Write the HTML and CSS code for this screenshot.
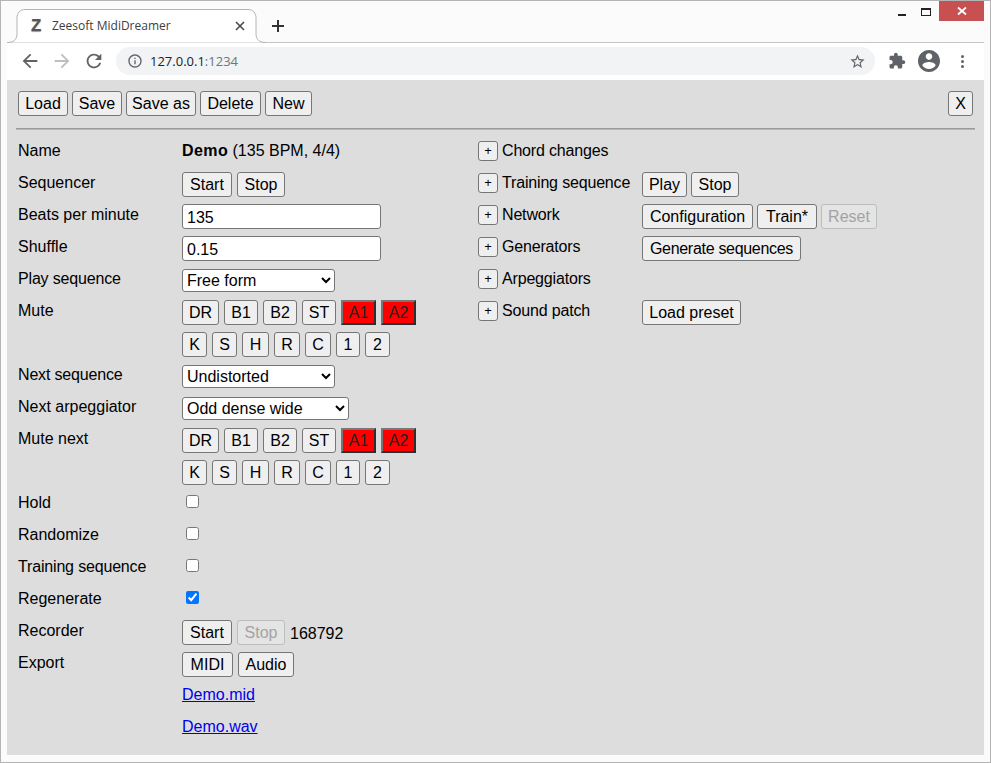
FILE: index.html
```html
<!DOCTYPE html>
<html lang="en">
<head>
    <meta charset="UTF-8">
    <title>Zeesoft MidiDreamer</title>
    <link rel="stylesheet" href="styles.css">
</head>
<body>
    <div class="window">
        <div class="titlebar">
            <div class="tab">
                <svg class="tab-shape" width="259" height="34" viewBox="0 0 259 34"><path d="M0 33.5C6 33.5 10 31 10 25V9C10 4 13 .5 18 .5H241C246 .5 249 4 249 9V25C249 31 253 33.5 259 33.5" fill="#fff" stroke="#b4b4b4"/></svg>
                <span class="favicon">Z</span>
                <span class="tab-title">Zeesoft MidiDreamer</span>
                <svg class="tab-close" width="10" height="10" viewBox="0 0 10 10"><path d="M1 1l8 8M9 1l-8 8" stroke="#45494d" stroke-width="1.6"/></svg>
            </div>
            <svg class="new-tab" width="14" height="14" viewBox="0 0 14 14"><path d="M7 1v12M1 7h12" stroke="#333" stroke-width="2"/></svg>
            <div class="window-buttons">
                <span class="win-min"></span>
                <span class="win-max"></span>
                <span class="win-close"><svg width="10" height="10" viewBox="0 0 10 10"><path d="M1 1.5l8 7M9 1.5l-8 7" stroke="#fff" stroke-width="1.8"/></svg></span>
            </div>
        </div>
        <div class="toolbar">
            <svg class="tool" viewBox="0 0 24 24"><path fill="#5f6368" d="M20 11H7.83l5.59-5.59L12 4l-8 8 8 8 1.41-1.41L7.83 13H20v-2z"/></svg>
            <svg class="tool" viewBox="0 0 24 24"><path fill="#bcbec0" d="M4 11h12.17l-5.59-5.59L12 4l8 8-8 8-1.41-1.41L16.17 13H4v-2z"/></svg>
            <svg class="tool" viewBox="0 0 24 24"><path fill="#5f6368" d="M17.65 6.35C16.2 4.9 14.21 4 12 4c-4.42 0-7.99 3.58-7.99 8s3.57 8 7.99 8c3.73 0 6.84-2.55 7.73-6h-2.08c-.82 2.33-3.04 4-5.65 4-3.31 0-6-2.69-6-6s2.69-6 6-6c1.66 0 3.14.69 4.22 1.78L13 11h7V4l-2.35 2.35z"/></svg>
            <div class="omnibox">
                <svg class="info" viewBox="0 0 24 24"><path fill="#5f6368" d="M11 7h2v2h-2zm0 4h2v6h-2zm1-9C6.48 2 2 6.48 2 12s4.48 10 10 10 10-4.48 10-10S17.52 2 12 2zm0 18c-4.41 0-8-3.59-8-8s3.59-8 8-8 8 3.59 8 8-3.59 8-8 8z"/></svg>
                <span class="url">127.0.0.1<span class="url-port">:1234</span></span>
                <svg class="star" viewBox="0 0 24 24"><path fill="#5f6368" d="M22 9.24l-7.19-.62L12 2 9.19 8.63 2 9.24l5.46 4.73L5.82 21 12 17.27 18.18 21l-1.63-7.03L22 9.24zM12 15.4l-3.76 2.27 1-4.28-3.32-2.88 4.38-.38L12 6.1l1.71 4.04 4.38.38-3.32 2.88 1 4.28L12 15.4z"/></svg>
            </div>
            <svg class="puzzle" viewBox="0 0 24 24"><path fill="#5f6368" d="M20.5 11H19V7c0-1.1-.9-2-2-2h-4V3.5C13 2.12 11.88 1 10.5 1S8 2.12 8 3.5V5H4c-1.1 0-1.99.9-1.99 2v3.8H3.5c1.49 0 2.7 1.21 2.7 2.7s-1.21 2.7-2.7 2.7H2V20c0 1.1.9 2 2 2h3.8v-1.5c0-1.49 1.21-2.7 2.7-2.7 1.49 0 2.7 1.21 2.7 2.7V22H17c1.1 0 2-.9 2-2v-4h1.5c1.38 0 2.5-1.12 2.5-2.5S21.88 11 20.5 11z"/></svg>
            <svg class="avatar" viewBox="2 2 20 20"><path fill="#5f6368" d="M12 2C6.48 2 2 6.48 2 12s4.48 10 10 10 10-4.48 10-10S17.52 2 12 2zm0 3c1.66 0 3 1.34 3 3s-1.34 3-3 3-3-1.34-3-3 1.34-3 3-3zm0 14.2c-2.5 0-4.71-1.28-6-3.22.03-1.99 4-3.08 6-3.08 1.99 0 5.97 1.09 6 3.08-1.29 1.94-3.5 3.22-6 3.22z"/></svg>
            <div class="dots"><i></i><i></i><i></i></div>
        </div>

        <div class="page">
            <div class="menu">
                <div class="menu-left">
                    <button class="btn-load">Load</button>
                    <button class="btn-save">Save</button>
                    <button class="btn-saveas">Save as</button>
                    <button class="btn-delete">Delete</button>
                    <button class="btn-new">New</button>
                </div>
                <button class="btn-close">X</button>
            </div>
            <hr class="divider">
            <div class="columns">
                <div class="column-left">
                    <div class="row"><div class="label">Name</div><div class="text"><b>Demo</b> (135 BPM, 4/4)</div></div>
                    <div class="row"><div class="label">Sequencer</div><div class="controls"><button class="btn-start">Start</button><button class="btn-stop">Stop</button></div></div>
                    <div class="row"><div class="label">Beats per minute</div><div class="controls"><input type="text" value="135"></div></div>
                    <div class="row"><div class="label">Shuffle</div><div class="controls"><input type="text" value="0.15"></div></div>
                    <div class="row"><div class="label narrow">Play sequence</div><div class="controls"><select class="select-short"><option>Free form</option></select></div></div>
                    <div class="row"><div class="label">Mute</div><div class="controls"><button class="voice-dr">DR</button><button class="voice">B1</button><button class="voice">B2</button><button class="voice">ST</button><button class="muted">A1</button><button class="muted">A2</button></div></div>
                    <div class="row"><div class="label"></div><div class="controls"><button class="key">K</button><button class="key">S</button><button class="key-h">H</button><button class="key-r">R</button><button class="key-r">C</button><button class="key-1">1</button><button class="key">2</button></div></div>
                    <div class="row"><div class="label narrow">Next sequence</div><div class="controls"><select class="select-short"><option>Undistorted</option></select></div></div>
                    <div class="row"><div class="label">Next arpeggiator</div><div class="controls"><select class="select-long"><option>Odd dense wide</option></select></div></div>
                    <div class="row"><div class="label">Mute next</div><div class="controls"><button class="voice-dr">DR</button><button class="voice">B1</button><button class="voice">B2</button><button class="voice">ST</button><button class="muted">A1</button><button class="muted">A2</button></div></div>
                    <div class="row"><div class="label"></div><div class="controls"><button class="key">K</button><button class="key">S</button><button class="key-h">H</button><button class="key-r">R</button><button class="key-r">C</button><button class="key-1">1</button><button class="key">2</button></div></div>
                    <div class="row"><div class="label">Hold</div><div class="controls check"><input type="checkbox"></div></div>
                    <div class="row"><div class="label">Randomize</div><div class="controls check"><input type="checkbox"></div></div>
                    <div class="row"><div class="label narrow">Training sequence</div><div class="controls check"><input type="checkbox"></div></div>
                    <div class="row"><div class="label">Regenerate</div><div class="controls check"><input type="checkbox" checked></div></div>
                    <div class="row"><div class="label">Recorder</div><div class="controls"><button class="btn-start">Start</button><button class="btn-stop" disabled>Stop</button><span class="counter">168792</span></div></div>
                    <div class="row"><div class="label">Export</div><div class="controls"><button class="btn-midi">MIDI</button><button class="btn-audio">Audio</button></div></div>
                    <div class="row"><div class="label"></div><div class="text"><a href="#">Demo.mid</a></div></div>
                    <div class="row"><div class="label"></div><div class="text"><a href="#">Demo.wav</a></div></div>
                </div>
                <div class="column-right">
                    <div class="row"><div class="label"><button class="expand">+</button>Chord changes</div></div>
                    <div class="row"><div class="label"><button class="expand">+</button>Training sequence</div><div class="controls tight"><button class="btn-play">Play</button><button class="btn-stop">Stop</button></div></div>
                    <div class="row"><div class="label"><button class="expand">+</button>Network</div><div class="controls tight"><button class="btn-config">Configuration</button><button class="btn-train">Train*</button><button class="btn-reset" disabled>Reset</button></div></div>
                    <div class="row"><div class="label"><button class="expand">+</button>Generators</div><div class="controls"><button class="btn-generate">Generate sequences</button></div></div>
                    <div class="row"><div class="label"><button class="expand">+</button>Arpeggiators</div></div>
                    <div class="row"><div class="label"><button class="expand">+</button>Sound patch</div><div class="controls"><button class="btn-preset">Load preset</button></div></div>
                </div>
            </div>
        </div>
    </div>
</body>
</html>
```

FILE: styles.css
```css
html, body {
    margin: 0;
    height: 100%;
}
body {
    font-family: "Liberation Sans", Arial, sans-serif;
    font-size: 16px;
    color: #000;
    background-color: #fff;
}
.window {
    box-sizing: border-box;
    width: 991px;
    height: 763px;
    overflow: hidden;
    display: flex;
    flex-direction: column;
    background-color: #fbfbfb;
    border: 1px solid #b4b4b4;
    padding: 0 6px 7px 6px;
}

/* browser frame */
.titlebar {
    display: flex;
    align-items: flex-start;
    height: 41px;
    border-bottom: 1px solid #c4c4c4;
    box-sizing: content-box;
    flex: none;
}
.tab {
    position: relative;
    display: flex;
    align-items: center;
    width: 239px;
    height: 33px;
    margin: 8px 0 0 10px;
    font-family: "Open Sans", sans-serif;
    font-size: 12px;
    color: #3c4043;
}
.tab-shape {
    position: absolute;
    left: -10px;
    top: 0;
    z-index: 1;
}
.favicon, .tab-title, .tab-close {
    position: relative;
    z-index: 2;
}
.favicon {
    width: 13px;
    margin-left: 14px;
    font-family: "Liberation Sans", sans-serif;
    font-weight: bold;
    font-size: 17px;
    color: #555;
    text-shadow: 0 1px 1px #999;
}
.tab-title {
    margin-left: 8px;
    width: 183px;
    white-space: nowrap;
}
.tab-close {
    flex: none;
}
.new-tab {
    margin: 18px 0 0 15px;
}
.window-buttons {
    display: flex;
    margin-left: auto;
}
.win-min {
    width: 8px;
    height: 2px;
    margin: 13px 15px 0 0;
    background-color: #222;
}
.win-max {
    box-sizing: border-box;
    width: 10px;
    height: 8px;
    margin: 7px 8px 0 0;
    border: 1px solid #222;
    border-top-width: 2px;
}
.win-close {
    display: flex;
    align-items: center;
    justify-content: center;
    width: 45px;
    height: 20px;
    background-color: #c75050;
}
.toolbar {
    flex: none;
    display: flex;
    align-items: center;
    box-sizing: border-box;
    height: 37px;
    padding-bottom: 1px;
    background-color: #fff;
}
.tool {
    width: 22px;
    height: 22px;
    margin-left: 12px;
    flex: none;
}
.tool + .tool {
    margin-left: 10px;
}
.omnibox {
    flex: none;
    display: flex;
    align-items: center;
    width: 759px;
    height: 28px;
    margin-left: 11px;
    border-radius: 14px;
    background-color: #f1f3f4;
    font-family: "Open Sans", sans-serif;
    font-size: 13px;
}
.info {
    width: 16px;
    height: 16px;
    margin-left: 11px;
}
.url {
    margin-left: 7px;
    color: #202124;
}
.url-port {
    color: #70757a;
}
.star {
    width: 17px;
    height: 17px;
    margin-left: auto;
    margin-right: 9px;
}
.puzzle {
    width: 18px;
    height: 18px;
    margin-left: 13px;
}
.avatar {
    width: 22px;
    height: 22px;
    margin-left: 12px;
}
.dots {
    display: flex;
    flex-direction: column;
    gap: 2px;
    margin-left: 21px;
}
.dots i {
    width: 3px;
    height: 3px;
    border-radius: 50%;
    background-color: #5f6368;
}

/* page */
.page {
    flex: 1;
    background-color: #dddddd;
    padding: 11px 11px 0 11px;
    min-height: 0;
}
.menu {
    display: flex;
    justify-content: space-between;
}
.menu-left {
    display: flex;
    gap: 4px;
}
.divider {
    margin: 12px -2px 4px -2px;
    height: 0;
    border: 0;
    border-top: 1px solid #9a9a9a;
    border-bottom: 1px solid #b8b8b8;
}
.columns {
    display: flex;
}
.column-left {
    width: 460px;
}
.row {
    display: flex;
    height: 32px;
}
.label {
    width: 164px;
    flex: none;
    box-sizing: border-box;
    height: 32px;
    padding-top: 1px;
    line-height: 32px;
    white-space: nowrap;
}
.label.narrow, .column-right .label {
    letter-spacing: -0.17px;
}
.text {
    line-height: 34px;
}
.text b {
    letter-spacing: 0.4px;
}
.controls {
    display: flex;
    align-items: center;
    gap: 5px;
    height: 25px;
    padding-top: 6px;
}
.controls.tight {
    gap: 4px;
}
.controls.check {
    align-items: flex-start;
}
.counter {
    padding-top: 2px;
}
button {
    box-sizing: border-box;
    height: 25px;
    padding: 1px 0 0;
    font-family: inherit;
    font-size: 16px;
    color: #000;
    background-color: #efefef;
    border: 1px solid #767676;
    border-radius: 3px;
    white-space: nowrap;
}
button:disabled {
    color: #a3a3a3;
    border-color: #bdbdbd;
    background-color: #e4e4e4;
}
button.muted {
    width: 35px;
    padding: 0;
    color: #222;
    background-color: #ff0000;
    border-style: solid;
    border-width: 2px;
    border-color: #777 #2e2e2e #2e2e2e #777;
    border-radius: 0;
}
button.expand {
    width: 20px;
    height: 20px;
    padding: 0;
    margin-right: 4px;
    font-size: 13px;
    line-height: 16px;
    vertical-align: 1px;
    letter-spacing: 0;
}
.btn-load { width: 50px; }
.btn-save { width: 50px; }
.btn-saveas { width: 70px; }
.btn-delete { width: 61px; }
.btn-new { width: 47px; }
.btn-close { width: 25px; }
.btn-start { width: 50px; }
.btn-stop { width: 48px; }
.btn-midi { width: 51px; }
.btn-audio { width: 56px; }
.btn-play { width: 45px; }
.btn-config { width: 111px; }
.btn-train { width: 60px; }
.btn-reset { width: 56px; }
.btn-generate { width: 159px; letter-spacing: -0.3px; }
.btn-preset { width: 99px; }
.voice { width: 34px; }
.voice-dr { width: 37px; }
.key { width: 25px; }
.key-h { width: 27px; }
.key-r { width: 26px; }
.key-1 { width: 24px; }
input[type="text"] {
    box-sizing: border-box;
    width: 199px;
    height: 25px;
    padding: 2px 4px 0;
    font-family: inherit;
    font-size: 16px;
    background-color: #fff;
    border: 1px solid #767676;
    border-radius: 3px;
}
select {
    box-sizing: border-box;
    height: 23px;
    font-family: inherit;
    font-size: 16px;
    background-color: #fff;
    border: 1px solid #767676;
    border-radius: 3px;
}
.select-short {
    width: 153px;
}
.select-long {
    width: 167px;
}
input[type="checkbox"] {
    margin: 3px 3px 3px 4px;
}
a {
    color: #0000ee;
}
```
